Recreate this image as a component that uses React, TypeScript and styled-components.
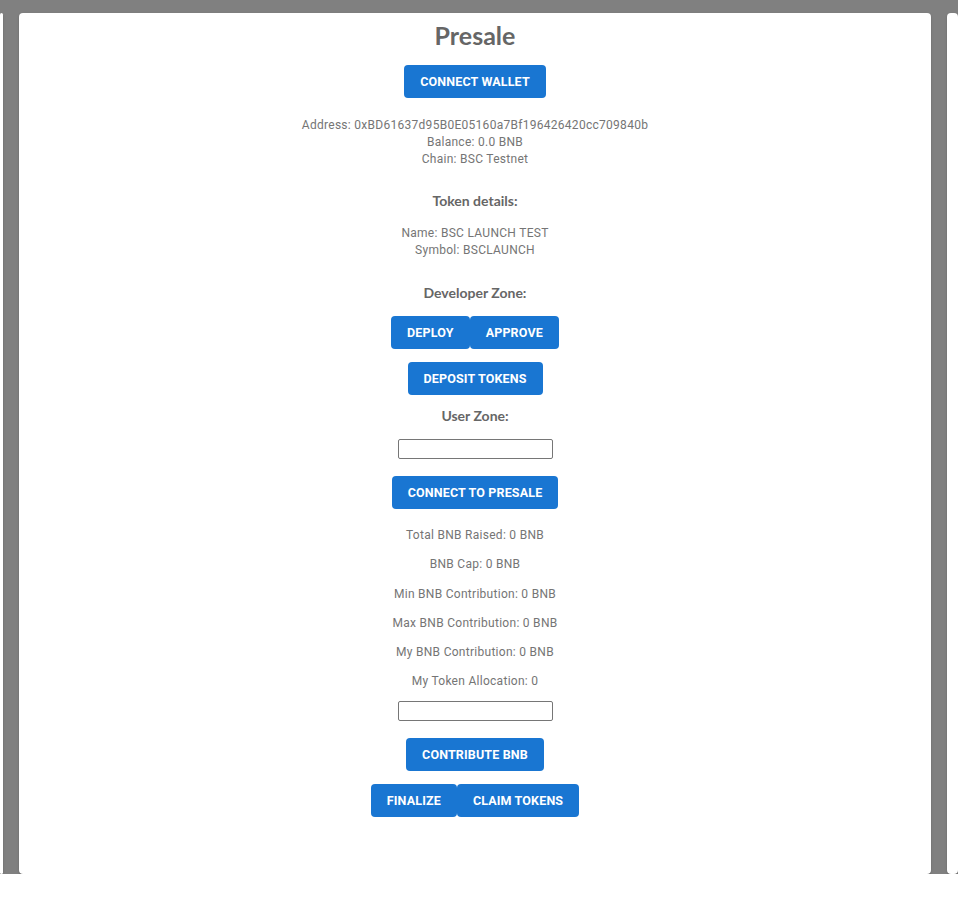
import React from "react";
import styled, { createGlobalStyle } from "styled-components";

const Global = createGlobalStyle`
  html, body { margin: 0; padding: 0; background: #ffffff; }
  body { font-family: Roboto, "Liberation Sans", sans-serif; }
`;

const Stage = styled.div`
  background: #808080;
  padding-top: 13px;
  display: grid;
  grid-template-columns: 3px 1fr 11px;
  column-gap: 16px;
  overflow: hidden;
`;

const Card = styled.div`
  background: #ffffff;
  border-radius: 4px;
  box-shadow: 0 2px 1px -1px rgba(0, 0, 0, 0.2), 0 1px 1px 0 rgba(0, 0, 0, 0.14),
    0 1px 3px 0 rgba(0, 0, 0, 0.12);
  height: 861px;
`;

const Main = styled(Card)`
  display: flex;
  flex-direction: column;
  align-items: center;
  color: #757575;
`;

const Title = styled.h1`
  font-family: Lato, "Liberation Sans", sans-serif;
  font-weight: 700;
  font-size: 25px;
  line-height: 29px;
  color: #666666;
  margin: 8px 0 15px;
`;

const Heading = styled.h3<{ $mt: number; $mb: number }>`
  font-family: Lato, "Liberation Sans", sans-serif;
  font-weight: 700;
  font-size: 14px;
  line-height: 18px;
  color: #666666;
  margin: ${(p) => `${p.$mt}px 0 ${p.$mb}px`};
`;

const Info = styled.div<{ $mt: number }>`
  font-size: 12px;
  line-height: 17px;
  letter-spacing: 0.28px;
  text-align: center;
  margin-top: ${(p) => p.$mt}px;
`;

const StatList = styled.div`
  display: flex;
  flex-direction: column;
  align-items: center;
  gap: 12.3px;
  margin: 18px 0 11px;
`;

const Stat = styled.p`
  font-size: 12px;
  line-height: 17px;
  letter-spacing: 0.28px;
  margin: 0;
  text-align: center;
`;

const Button = styled.button`
  background: #1976d2;
  color: #ffffff;
  border: none;
  border-radius: 4px;
  height: 33px;
  padding: 0 16px;
  font-family: Roboto, "Liberation Sans", sans-serif;
  font-weight: 700;
  font-size: 12.5px;
  letter-spacing: 0.15px;
  text-transform: uppercase;
  cursor: pointer;
`;

const Row = styled.div<{ $mt: number }>`
  display: flex;
  margin-top: ${(p) => p.$mt}px;
`;

const Input = styled.input`
  width: 155px;
  height: 20px;
  box-sizing: border-box;
  border: 1px solid #767676;
  border-radius: 2px;
  padding: 1px 2px;
  font-size: 12px;
`;

export default function App() {
  return (
    <>
      <Global />
      <Stage>
        <Card />
        <Main>
          <Title>Presale</Title>
          <Button>Connect Wallet</Button>
          <Info $mt={19}>
            Address: 0xBD61637d95B0E05160a7Bf196426420cc709840b
            <br />
            Balance: 0.0 BNB
            <br />
            Chain: BSC Testnet
          </Info>
          <Heading $mt={24} $mb={15}>Token details:</Heading>
          <Info $mt={0}>
            Name: BSC LAUNCH TEST
            <br />
            Symbol: BSCLAUNCH
          </Info>
          <Heading $mt={25} $mb={14}>Developer Zone:</Heading>
          <Row $mt={0}>
            <Button>Deploy</Button>
            <Button>Approve</Button>
          </Row>
          <Row $mt={13}>
            <Button>Deposit Tokens</Button>
          </Row>
          <Heading $mt={12} $mb={14}>User Zone:</Heading>
          <Input />
          <Row $mt={17}>
            <Button>Connect to Presale</Button>
          </Row>
          <StatList>
            <Stat>Total BNB Raised: 0 BNB</Stat>
            <Stat>BNB Cap: 0 BNB</Stat>
            <Stat>Min BNB Contribution: 0 BNB</Stat>
            <Stat>Max BNB Contribution: 0 BNB</Stat>
            <Stat>My BNB Contribution: 0 BNB</Stat>
            <Stat>My Token Allocation: 0</Stat>
          </StatList>
          <Input />
          <Row $mt={17}>
            <Button>Contribute BNB</Button>
          </Row>
          <Row $mt={13}>
            <Button>Finalize</Button>
            <Button>Claim Tokens</Button>
          </Row>
        </Main>
        <Card />
      </Stage>
    </>
  );
}
